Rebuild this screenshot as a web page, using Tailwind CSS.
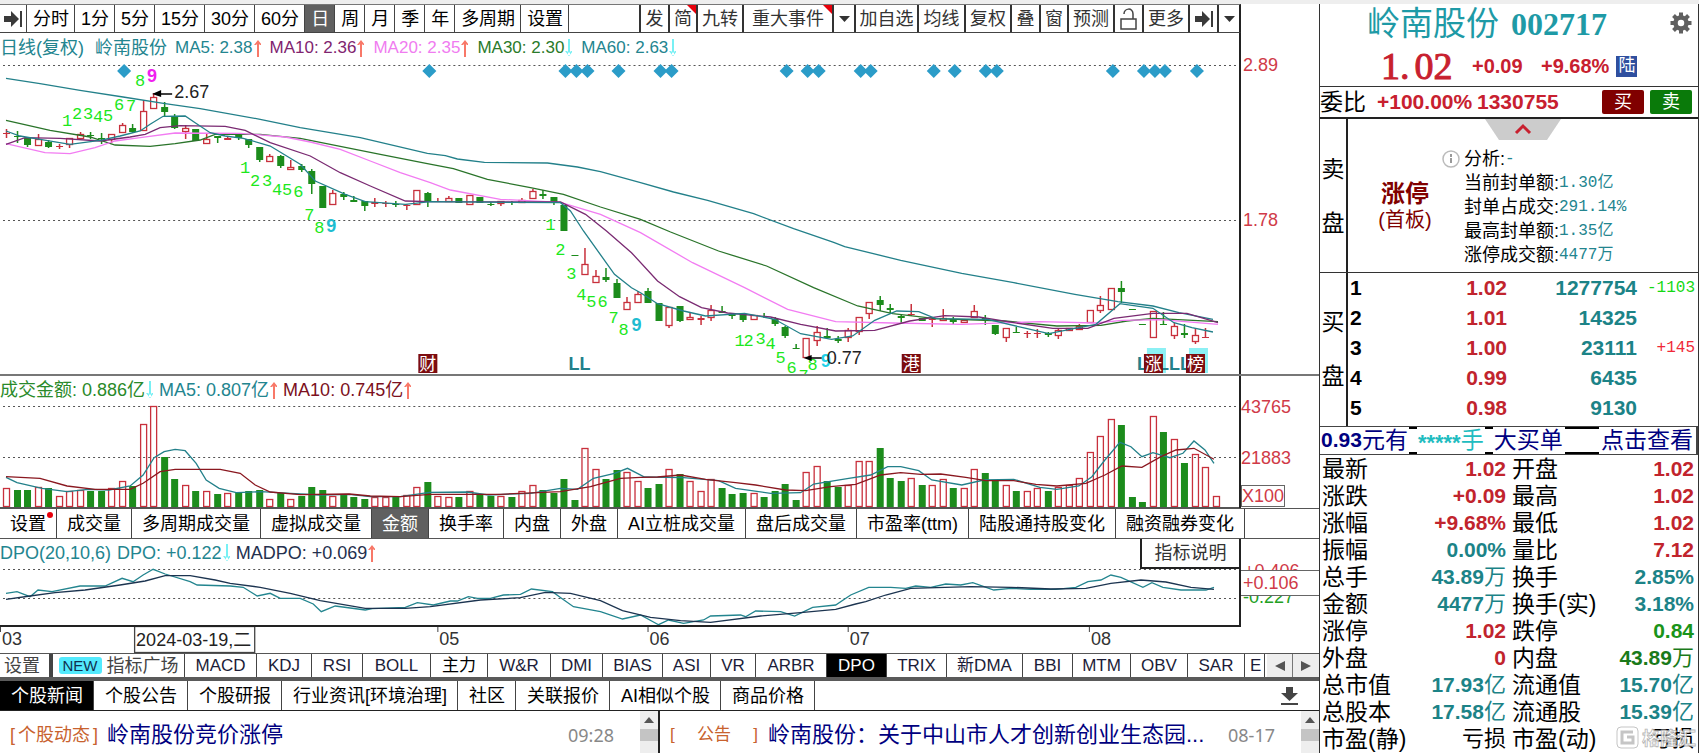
<!DOCTYPE html>
<html lang="zh-CN">
<head>
<meta charset="utf-8">
<title>岭南股份 002717</title>
<script src="https://cdn.jsdelivr.net/npm/@tailwindcss/browser@4"></script>
</head>
<body class="flex h-screen min-h-[753px] flex-col overflow-hidden bg-white font-['Liberation_Sans','Noto_Sans_CJK_SC',sans-serif] text-[18px] leading-[22px] text-black">
<div class="h-1 shrink-0 bg-[#eeeeee]"></div>
<div class="flex min-h-0 flex-1">

<main class="flex min-w-0 flex-1 flex-col">
  <!-- period toolbar -->
  <div class="flex h-[29px] shrink-0 pr-[78px]">
    <div class="flex flex-1 border-y border-r-2 border-r-[#222] border-t-[#777] border-b-[#444]">
      <button aria-label="展开" class="grid w-[27px] place-items-center border-r border-[#444]"><svg width="18" height="16" viewBox="0 0 18 16" fill="#3a3a3a"><path d="M0 5h7V0l8 8-8 8v-5H0zM16 0h2v16h-2z"/></svg></button>
      <nav class="flex *:border-r *:border-[#444] *:pl-[6px] *:pr-[5px]">
        <button>分时</button><button>1分</button><button>5分</button><button>15分</button><button>30分</button><button>60分</button><button class="bg-[#606060] text-white">日</button><button>周</button><button>月</button><button>季</button><button>年</button><button>多周期</button><button>设置</button>
      </nav>
      <div class="ml-auto flex text-[#333] *:border-l-2 *:border-[#333]">
        <button class="w-[29px]">发</button>
        <button class="relative w-[28px]">简<span class="absolute right-0 top-0 border-l-[9px] border-t-[9px] border-l-transparent border-t-red-600"></span></button>
        <button class="w-[46px]">九转</button>
        <button class="relative w-[90px]">重大事件<span class="absolute right-0 top-0 border-l-[9px] border-t-[9px] border-l-transparent border-t-red-600"></span></button>
        <button aria-label="事件菜单" class="grid w-[22px] place-items-center"><svg width="11" height="6"><path d="M0 0h11L5.500 6z" fill="#333"/></svg></button>
        <button class="w-[63px]">加自选</button>
        <button class="w-[47px]">均线</button>
        <button class="w-[46px]">复权</button>
        <button class="w-[29px]">叠</button>
        <button class="w-[28px]">窗</button>
        <button class="w-[46px]">预测</button>
        <button aria-label="锁定" class="grid w-[29px] place-items-center"><svg width="17" height="22" viewBox="0 0 17 22" fill="none" stroke="#444" stroke-width="1.500"><path d="M1 11h15v10H1zM4 6c0-6 9-7 9 0v5"/></svg></button>
        <button class="w-[46px]">更多</button>
        <button aria-label="收起" class="grid w-[29px] place-items-center"><svg width="18" height="16" viewBox="0 0 18 16" fill="#3a3a3a"><path d="M0 5h7V0l8 8-8 8v-5H0zM16 0h2v16h-2z"/></svg></button>
        <button aria-label="工具菜单" class="grid w-[22px] place-items-center"><svg width="11" height="6"><path d="M0 0h11L5.500 6z" fill="#333"/></svg></button>
      </div>
    </div>
  </div>

  <!-- price chart -->
  <section class="flex h-[343px] shrink-0 border-b-2 border-[#777]">
    <div class="min-w-0 flex-1 border-r-2 border-[#222]">
      <div class="flex h-[30px] items-center text-[17px] text-[#23858f]">
        <span class="mr-[11px] text-[18px]">日线(复权)</span><span class="mr-2 text-[18px]">岭南股份</span>
        <span>MA5: 2.38</span><svg class="ml-px mr-[9px]" width="7" height="18"><use href="#up"/></svg>
        <span class="text-[#80246f]">MA10: 2.36</span><svg class="ml-px mr-[9px]" width="7" height="18"><use href="#up"/></svg>
        <span class="text-[#f07cf0]">MA20: 2.35</span><svg class="ml-px mr-[9px]" width="7" height="18"><use href="#up"/></svg>
        <span class="text-[#2a7a2a]">MA30: 2.30</span><svg class="ml-px mr-[9px]" width="7" height="18"><use href="#down"/></svg>
        <span>MA60: 2.63</span><svg class="ml-px" width="7" height="18"><use href="#down"/></svg>
      </div>
      <svg id="price" class="block h-[311px] w-full" viewBox="0 62 1238 311" preserveAspectRatio="none"></svg>
    </div>
    <div class="w-[78px] pt-[21px] pl-[2px] text-[#d03a48]">
      <div>2.89</div><div class="mt-[133px]">1.78</div>
    </div>
  </section>

  <!-- turnover chart -->
  <section class="flex h-[132px] shrink-0">
    <div class="min-w-0 flex-1 border-r-2 border-[#222]">
      <div class="flex h-[28px] items-center">
        <span class="text-[#2a8a2a]">成交金额: 0.886亿</span><svg class="ml-px mr-[6px]" width="7" height="18"><use href="#down"/></svg>
        <span class="text-[#23858f]">MA5: 0.807亿</span><svg class="ml-px mr-[6px]" width="7" height="18"><use href="#up"/></svg>
        <span class="text-[#7c1020]">MA10: 0.745亿</span><svg class="ml-px" width="7" height="18"><use href="#up"/></svg>
      </div>
      <svg id="volume" class="block h-[104px] w-full" viewBox="0 404 1238 104" preserveAspectRatio="none"></svg>
    </div>
    <div class="w-[78px] pt-[20px] text-[#d03a48]">
      <div>43765</div><div class="mt-[29px]">21883</div>
      <div class="mt-[16px] inline-block border border-[#666] leading-[20px]">X100</div>
    </div>
  </section>

  <!-- sub-chart tabs -->
  <nav class="flex h-[31px] shrink-0 border-y border-[#555] *:shrink-0 *:border-r *:border-[#444] *:px-[10px]">
    <button class="relative">设置<span class="absolute right-[3px] top-[3px] size-[6px] rounded-full bg-red-600"></span></button><button>成交量</button><button>多周期成交量</button><button>虚拟成交量</button><button class="bg-[#606060] text-white">金额</button><button>换手率</button><button>内盘</button><button>外盘</button><button>AI立桩成交量</button><button>盘后成交量</button><button>市盈率(ttm)</button><button>陆股通持股变化</button><button>融资融券变化</button>
  </nav>

  <!-- DPO chart -->
  <section class="flex h-[88px] shrink-0">
    <div class="relative min-w-0 flex-1 border-b-2 border-r-2 border-[#222]">
      <div class="flex h-[28px] items-center text-[#23858f]">
        <span class="mr-[6px]">DPO(20,10,6)</span><span>DPO: +0.122</span><svg class="ml-px mr-[6px]" width="7" height="18"><use href="#down"/></svg>
        <span class="text-[#24304e]">MADPO: +0.069</span><svg class="ml-px" width="7" height="18"><use href="#up"/></svg>
      </div>
      <svg id="dpo" class="block h-[58px] w-full" viewBox="0 567 1238 58" preserveAspectRatio="none"></svg>
      <button class="absolute right-0 top-0 h-[30px] w-[99px] border-b-2 border-l-2 border-[#222] bg-white text-[#333]">指标说明</button>
    </div>
    <div class="w-[78px] pt-[23px] text-[#d03a48]">
      <div class="h-[8px] overflow-hidden pl-[3px] leading-[18px]">+0.406</div>
      <div class="border-y border-[#666] pl-[2px] leading-[24px]">+0.106</div>
      <div class="flex h-[10px] items-end overflow-hidden pl-[2px] leading-[18px] text-[#22a022]">-0.227</div>
    </div>
  </section>
  <div class="shrink-0 pr-[78px]"><svg id="axis" class="block h-[26px] w-full" viewBox="0 627 1240 26" preserveAspectRatio="none"></svg></div>

  <!-- indicator tabs -->
  <div class="flex h-[28px] shrink-0 border-b-4 border-t border-b-[#5a5a5a] border-t-[#555] text-[17px]">
    <nav class="flex min-w-0 flex-1 overflow-hidden text-[#1c1c38] *:shrink-0 *:border-r *:border-[#444]">
      <button class="w-[50px] pr-[5px] text-[18px] text-[#444]">设置</button>
      <button class="flex w-[135px] items-center justify-center gap-[5px] border-l-3 text-[18px] text-[#444]"><span class="rounded-[3px] bg-cyan-300 px-[4px] text-[15px] leading-[17px] text-[#103050]">NEW</span>指标广场</button>
      <button class="w-[72px]">MACD</button><button class="w-[55px]">KDJ</button><button class="w-[51px]">RSI</button><button class="w-[68px]">BOLL</button><button class="w-[57px] text-black">主力</button><button class="w-[63px]">W&amp;R</button><button class="w-[52px]">DMI</button><button class="w-[60px]">BIAS</button><button class="w-[48px]">ASI</button><button class="w-[45px]">VR</button><button class="w-[71px]">ARBR</button><button class="w-[60px] bg-black text-white">DPO</button><button class="w-[60px]">TRIX</button><button class="w-[76px]">新DMA</button><button class="w-[50px]">BBI</button><button class="w-[58px]">MTM</button><button class="w-[57px]">OBV</button><button class="w-[57px]">SAR</button><button class="w-[20px] pl-[5px] text-left">E</button>
    </nav>
    <button aria-label="向左" class="grid w-[26px] place-items-center border-r border-[#777] bg-[#eee]"><svg width="10" height="10"><path d="M10 0v10L0 5z" fill="#555"/></svg></button>
    <button aria-label="向右" class="grid w-[26px] place-items-center bg-[#eee]"><svg width="10" height="10"><path d="M0 0v10L10 5z" fill="#555"/></svg></button>
  </div>

  <!-- news -->
  <div class="flex h-[30px] shrink-0 border-b border-[#222]">
    <nav class="flex flex-1 *:border-r *:border-[#444] *:pl-[11px] *:pr-[10px]">
      <button class="bg-black text-white">个股新闻</button><button>个股公告</button><button>个股研报</button><button>行业资讯[环境治理]</button><button>社区</button><button>关联报价</button><button>AI相似个股</button><button>商品价格</button>
    </nav>
    <button aria-label="下载" class="mr-[21px]"><svg width="17" height="18" viewBox="0 0 17 18" fill="#444"><path d="M5 0h7v6h5l-8.500 8L0 6h5zM0 16h17v2H0z"/></svg></button>
  </div>
  <div class="flex min-h-0 flex-1 whitespace-nowrap">
    <div class="flex w-[660px] border-r-2 border-[#222]">
      <div class="flex flex-1 items-center pt-[5px]">
        <span class="ml-[10px] mr-[9px] flex w-[88px] justify-between text-[18px] text-[#c8622e]"><span>[</span><span>个股动态</span><span>]</span></span>
        <a href="#news" class="text-[22px] text-[#000080]">岭南股份竞价涨停</a>
        <time class="ml-auto mr-[26px] font-['Noto_Sans'] text-[#888]">09:28</time>
      </div>
      <div class="flex h-full w-[18px] flex-col items-center bg-[#eee]"><svg class="mt-[6px]" width="10" height="6"><path d="M0 6h10L5 0z" fill="#555"/></svg><div class="mt-[6px] h-[12px] w-full bg-[#c4c4c4]"></div></div>
    </div>
    <div class="flex min-w-0 flex-1">
      <div class="flex flex-1 items-center pt-[5px]">
        <span class="mx-[10px] flex w-[88px] justify-between text-[17px] text-[#c8622e]"><span>[</span><span>公告</span><span>]</span></span>
        <a href="#notice" class="text-[22px] text-[#000080]">岭南股份：关于中山市人才创新创业生态园...</a>
        <time class="ml-auto mr-[26px] font-['Noto_Sans'] text-[#888]">08-17</time>
      </div>
      <div class="flex h-full w-[18px] flex-col items-center bg-[#eee]"><svg class="mt-[6px]" width="10" height="6"><path d="M0 6h10L5 0z" fill="#555"/></svg><div class="mt-[6px] h-[12px] w-full bg-[#c4c4c4]"></div></div>
    </div>
  </div>
</main>

<aside class="relative flex w-[380px] shrink-0 flex-col border-x border-[#333]">
  <header class="relative h-[83px] shrink-0 border-b border-[#333]">
    <h1 class="flex items-center gap-[12px] pl-[47px] pt-[2px] text-[33px] leading-[36px] text-[#1e9aa6]">岭南股份<span class="font-['Liberation_Serif'] text-[32px] font-bold">002717</span></h1>
    <div class="flex items-center pl-[61px] pt-[2px] text-[20px] font-bold leading-[44px] text-[#c8202f]">
      <span class="flex w-[91px] gap-[5px] font-['Liberation_Serif'] text-[38px] font-normal [-webkit-text-stroke:1px_#c8202f]"><span>1.</span><span>02</span></span><span class="w-[69px]">+0.09</span><span class="mr-[7px]">+9.68%</span>
      <span class="grid h-[21px] w-[21px] place-items-center bg-[#2f4f9f] text-[17px] font-normal leading-[20px] text-white">陆</span>
    </div>
    <button aria-label="设置" class="absolute right-[6px] top-[8px]"><svg width="22" height="22" viewBox="-11 -11 22 22"><circle r="5.500" fill="none" stroke="#606060" stroke-width="4.500"/><path d="M0-10.500v4M0 6.500v4M-10.500 0h4M6.500 0h4M-7.500-7.500l3 3M4.500 4.500l3 3M-7.500 7.500l3-3M4.500-4.500l3-3" stroke="#606060" stroke-width="4"/></svg></button>
  </header>
  <div class="flex h-[32px] shrink-0 items-center border-b-2 border-[#222] text-[21px] font-bold text-[#c8202f]">
    <span class="w-[57px] text-[23px] font-normal text-black">委比</span><span class="w-[100px]">+100.00%</span><span>1330755</span>
    <button class="ml-auto h-[24px] w-[42px] rounded-[2px] bg-[#800000] text-[18px] font-normal text-white">买</button>
    <button class="ml-[6px] mr-[6px] h-[24px] w-[42px] rounded-[2px] bg-[#0a7a0a] text-[18px] font-normal text-white">卖</button>
  </div>

  <!-- sell side -->
  <section class="relative flex h-[154px] shrink-0 border-b border-[#333]">
    <div class="flex w-[28px] flex-col items-center gap-[31px] border-r-2 border-[#222] pt-[39px] text-[23px] leading-[23px]"><span>卖</span><span>盘</span></div>
    <button aria-label="收起" class="absolute left-[165px] top-0"><svg width="76" height="21" viewBox="0 0 76 21"><path d="M0 0h76L62 21H14z" fill="#ccc"/><path d="M31 14l7-7 7 7" fill="none" stroke="#c8202f" stroke-width="3"/></svg></button>
    <div class="w-[95px] pt-[62px] text-center text-[#800000] pl-[19px]">
      <div class="text-[24px] font-bold leading-[26px]">涨停</div><div class="text-[20px] leading-[26px]">(首板)</div>
    </div>
    <dl class="grid grid-cols-[auto_1fr] content-start pl-[21px] pt-[28px] leading-[24px]">
      <dt class="col-span-2 -ml-[22px] flex items-center"><svg class="mr-[4px]" width="18" height="18"><circle cx="9" cy="9" r="8" fill="none" stroke="#bbb" stroke-width="1.500"/><path d="M9 4v3M9 8v5" stroke="#999" stroke-width="2"/></svg>分析:<span class="font-['Liberation_Mono'] text-[16px] text-[#23858f]">-</span></dt>
      <dt>当前封单额:</dt><dd class="font-['Liberation_Mono','Noto_Sans_CJK_SC'] text-[16px] text-[#23858f]">1.30亿</dd>
      <dt>封单占成交:</dt><dd class="font-['Liberation_Mono'] text-[16px] text-[#23858f]">291.14%</dd>
      <dt>最高封单额:</dt><dd class="font-['Liberation_Mono','Noto_Sans_CJK_SC'] text-[16px] text-[#23858f]">1.35亿</dd>
      <dt>涨停成交额:</dt><dd class="font-['Liberation_Mono','Noto_Sans_CJK_SC'] text-[16px] text-[#23858f]">4477万</dd>
    </dl>
  </section>

  <!-- buy side -->
  <section class="flex h-[153px] shrink-0">
    <div class="flex w-[28px] flex-col items-center gap-[31px] border-r-2 border-[#222] pt-[38px] text-[23px] leading-[23px]"><span>买</span><span>盘</span></div>
    <table class="h-[150px] flex-1 text-right text-[21px] font-bold text-[#c1242d]">
      <tbody>
      <tr><th class="w-[20px] pl-[2px] text-left text-black">1</th><td class="w-[139px]">1.02</td><td class="w-[130px] text-[#1c8387]">1277754</td><td class="pr-[3px] font-['Liberation_Mono'] text-[16px] font-normal text-[#14d814]">-1103</td></tr>
      <tr><th class="pl-[2px] text-left text-black">2</th><td>1.01</td><td class="text-[#1c8387]">14325</td><td></td></tr>
      <tr><th class="pl-[2px] text-left text-black">3</th><td>1.00</td><td class="text-[#1c8387]">23111</td><td class="pr-[3px] font-['Liberation_Mono'] text-[16px] font-normal text-[#f02838]">+145</td></tr>
      <tr><th class="pl-[2px] text-left text-black">4</th><td>0.99</td><td class="text-[#1c8387]">6435</td><td></td></tr>
      <tr><th class="pl-[2px] text-left text-black">5</th><td>0.98</td><td class="text-[#1c8387]">9130</td><td></td></tr>
      </tbody>
    </table>
  </section>

  <a href="#orders" class="flex h-[29px] shrink-0 items-stretch border-y border-r-2 border-[#444] pl-px text-[23px] leading-[26px] text-[#000080]">
    <b class="text-[21px]">0.93</b><span>元有</span><i class="mx-[1px] w-[8px] border-y-2 border-black"></i>
    <span class="flex text-[#20bcc0]"><b class="text-[22px] leading-[32px]">*****</b>手</span><i class="mx-px w-[8px] border-y-2 border-black"></i>
    <span>大买单</span><i class="mx-[2px] flex-1 border-y-2 border-black"></i><span class="mr-[3px]">点击查看</span>
  </a>

  <table class="w-full flex-1 text-[21px] leading-[24px] [&_td]:text-right [&_td]:font-bold [&_td]:whitespace-nowrap [&_td_span]:font-normal [&_td_span]:text-[22px] [&_th]:text-left [&_th]:font-normal [&_th]:text-[23px] [&_th]:whitespace-nowrap">
    <tbody class="text-[#c1242d] [&_th]:text-black">
    <tr><th class="w-[90px] pl-[2px]">最新</th><td class="w-[96px]">1.02</td><th class="w-[92px] pl-[6px]">开盘</th><td class="pr-[4px]">1.02</td></tr>
    <tr><th class="pl-[2px]">涨跌</th><td>+0.09</td><th class="pl-[6px]">最高</th><td class="pr-[4px]">1.02</td></tr>
    <tr><th class="pl-[2px]">涨幅</th><td>+9.68%</td><th class="pl-[6px]">最低</th><td class="pr-[4px]">1.02</td></tr>
    <tr><th class="pl-[2px]">振幅</th><td class="text-[#1c8387]">0.00%</td><th class="pl-[6px]">量比</th><td class="pr-[4px]">7.12</td></tr>
    <tr class="text-[#1c8387]"><th class="pl-[2px]">总手</th><td>43.89<span>万</span></td><th class="pl-[6px]">换手</th><td class="pr-[4px]">2.85%</td></tr>
    <tr class="text-[#1c8387]"><th class="pl-[2px]">金额</th><td>4477<span>万</span></td><th class="pl-[6px]">换手(实)</th><td class="pr-[4px]">3.18%</td></tr>
    <tr><th class="pl-[2px]">涨停</th><td>1.02</td><th class="pl-[6px]">跌停</th><td class="pr-[4px] text-[#1a941a]">0.84</td></tr>
    <tr><th class="pl-[2px]">外盘</th><td>0</td><th class="pl-[6px]">内盘</th><td class="pr-[4px] text-[#1a7a1a]">43.89<span>万</span></td></tr>
    <tr class="text-[#1c8387]"><th class="pl-[2px]">总市值</th><td>17.93<span>亿</span></td><th class="pl-[6px]">流通值</th><td class="pr-[4px]">15.70<span>亿</span></td></tr>
    <tr class="text-[#1c8387]"><th class="pl-[2px]">总股本</th><td>17.58<span>亿</span></td><th class="pl-[6px]">流通股</th><td class="pr-[4px]">15.39<span>亿</span></td></tr>
    <tr class="text-black"><th class="pl-[2px]">市盈(静)</th><td><span>亏损</span></td><th class="pl-[6px]">市盈(动)</th><td class="pr-[4px]"><span>亏损</span></td></tr>
    </tbody>
  </table>
  <svg class="absolute bottom-[2px] right-0 opacity-85" width="82" height="26" viewBox="0 0 82 26"><rect x="1" y="2" width="21" height="21" rx="4" fill="#fff" stroke="#bbb"/><path d="M17 7H6v11h11v-6h-6" fill="none" stroke="#bbb" stroke-width="3"/><text x="26" y="20" font-size="18" font-weight="700" fill="#fff" stroke="#aaa" stroke-width=".8">格隆汇</text></svg>
</aside>
</div>

<svg class="absolute size-0" aria-hidden="true"><defs>
  <g id="up"><path d="M3 2h2v16H3zM0 6l4-5 4 5H6L4 4 2 6z" fill="#f87868"/></g>
  <g id="down"><path d="M3 0h2v17H3zM0 12l4 5 4-5H6l-2 2-2-2z" fill="#78f0f4"/></g>
</defs></svg>

<script>
const RED = '#c8303c', GREEN = '#1c8c1c', TEAL = '#23808a';
const barX = i => Math.round(6.3 + 10.51 * i);
const rect = (x, y, w, h, f, s) => `<rect x="${x}" y="${y}" width="${w}" height="${h}" fill="${f}" stroke="${s || 'none'}" stroke-width="1.300"/>`;
const grid = (y) => `<path d="M3 ${y}.5H1238" stroke="#555" stroke-width="1" stroke-dasharray="2 3"/>`;
// points are "x,y" pairs, y counted in thirds of a pixel from the given origin
const line = (pts, color, origin) => `<polyline fill="none" stroke="${color}" stroke-width="1.300" points="${pts.trim().split(/\s+/).map(p => { const [x, y] = p.split(',').map(Number); return x + ',' + (origin + y / 3).toFixed(1); }).join(' ')}"/>`;
const text = (x, y, t, color, size = 18, extra = '') => `<text x="${x}" y="${y}" fill="${color}" font-size="${size}" ${extra}>${t}</text>`;

// candles: colour, high, body top, body bottom, low (thirds of a pixel)
const early = `R385 397 399 412|G390 404 406 425|G412 412 432 438|R400 413 436 436|G418 422 438 442|R428 435 437 445|R412 412 432 440|R393 398 413 413|G393 402 404 415|G397 412 414 430|R400 400 418 427|R365 371 396 396|G370 380 392 396|R296 331 391 391|R276 287 323 323|G303 317 332 345|G340 345 380 384|R372 382 394 414|G385 385 420 420|R400 414 430 430|G404 404 412 427|R408 410 417 417|G402 402 410 418|G415 415 432 440|G438 438 478 483|R460 466 482 482|G462 465 495 502|R478 498 508 508|G490 496 508 514|G503 510 548 580|G556 556 622 622|R568 577 611 611|G574 580 588 598|G585 596 602 602|G600 600 616 630|R592 603 609 618|R600 607 609 617|G601 608 610 618|R610 612 614 627|R566 566 611 611|G573 577 602 617|R590 600 601 602|R586 592 602 602|G592 592 606 606|R583 583 612 612|G587 587 606 606|G603 608 610 616|R600 600 610 616|G600 602 605 611|R592 598 605 605|R563 570 595 595|G568 578 584 594|G588 588 606 612|G612 612 689 689`;
const late = `G73 72 75 73|R50 100 133 133|R117 136 155 155|G112 137 147 153|G145 157 200 200|R198 213 237 237|R180 190 217 217|G171 180 215 215|G215 215 269 269|R227 227 286 290|G224 226 269 273|R243 258 268 268|R256 262 266 283|R222 237 262 270|G224 241 247 247|G246 248 256 265|G250 250 268 273|R252 252 268 268|G247 254 258 262|G258 263 279 284|G285 288 314 322|G338 351 354 352|R322 322 380 380|R286 302 330 345|G292 316 321 321|G316 325 329 336|R292 297 320 334|R258 258 304 312|R213 213 250 265|G195 208 223 240|G220 231 236 248|G248 254 262 275|R220 248 252 256|G262 262 270 270|R262 263 265 287|R233 262 270 270|G258 264 272 280|R268 268 277 277|R221 241 262 262|G252 262 268 283|G283 283 309 313|R292 292 322 334|G288 303 305 304|R300 307 309 320|R293 306 308 320|G304 307 313 318|R292 298 316 325|R290 292 300 300|R278 285 298 298|R236 236 276 276|R194 222 240 246|R172 172 236 236|G150 172 182 215|G236 235 237 236|G281 280 282 281|R240 240 322 322|G243 280 282 281|R276 285 316 325|G280 306 313 320|R290 312 332 340|R292 317 321 321`;
const parse = (src, origin) => src.split('|').map(s => [s[0], ...s.slice(1).split(' ').map(v => Math.round(origin + v / 3))]);
let out = grid(64) + grid(219);
[...parse(early, 0), ...parse(late, 230)].forEach(([c, hi, top, bot, lo], i) => {
  const x = barX(i), col = c === 'R' ? RED : GREEN, h = bot - top;
  out += `<path d="M${x}.5 ${hi}V${top}M${x}.5 ${bot}V${lo}" stroke="${col}" stroke-width="1.500"/>`;
  out += h < 3 ? rect(x - 3, top, 7, Math.max(1, h), col) : c === 'R' ? rect(x - 2.5, top + .5, 6, h - 1, 'none', col) : rect(x - 3, top, 7, h, col);
});
out += line('6,232 40,248 80,268 123,288 165,308 200,323 260,355 300,380 360,410 427,457 445,464 457,474 484,484 547,486 577,498 600,512 640,545 673,573 707,598 753,638 793,683 833,724 844,737 900,778 961,817 1013,845 1074,880 1117,902 1152,915 1178,935 1212,955', TEAL, 0);
out += line('6,358 50,388 90,408 115,432 150,436 175,428 200,417 215,400 260,400 300,412 330,430 380,460 427,488 453,503 487,535 530,560 563,580 600,618 640,655 670,693 718,750 766,795 813,860 857,915 892,938 935,953 1004,960 1056,975 1100,973 1126,960 1152,952 1217,962', '#2a742a', 0);
out += line('6,428 45,455 70,458 95,440 115,420 140,410 175,396 240,397 285,408 310,423 340,445 370,480 400,515 430,545 450,567 500,595 560,604 600,640 640,695 692,785 744,860 787,925 835,962 892,966 961,970 1009,965 1039,962 1095,966 1121,958 1160,956 1217,970', '#f27cf2', 0);
out += line('6,430 25,410 60,412 100,420 130,408 145,400 160,380 180,374 225,376 245,388 270,425 310,465 340,515 370,555 405,600 430,602 560,603 585,640 606,690 631,755 657,840 679,887 701,920 727,936 770,948 800,970 835,990 874,988 909,960 944,944 978,948 1013,965 1052,982 1087,982 1113,952 1152,937 1186,937 1217,965', '#7a2a72', 0);
out += line('6,390 20,405 40,415 70,430 100,418 120,405 140,390 150,370 163,346 185,345 195,365 210,395 225,405 243,412 270,435 300,490 315,540 345,580 365,602 405,610 430,602 560,605 570,630 583,690 614,820 631,860 640,875 657,908 683,930 705,945 744,937 774,955 800,998 831,1015 852,1005 874,958 896,930 918,932 935,953 987,955 1022,980 1048,998 1074,982 1095,970 1119,908 1152,922 1173,965 1191,980 1212,993', TEAL, 0);
[123, 428, 564, 575, 586, 617, 659, 670, 785, 806, 817, 859, 869, 932, 953, 984, 995, 1111, 1142, 1153, 1163, 1195].forEach(x => out += `<path d="M${x - 6} 70l7-7 7 7-7 7z" fill="#2b9cc8"/>`);
// nine-turn counters: digit, centre x, centre y
'1,67,119 2,77,112 3,88,112 4,98,115 5,108,114 6,119,103 7,131,104 8,140,79 1,245,166 2,255,179 3,267,179 4,277,188 5,287,188 6,298,190 7,309,213 8,319,226 1,550,223 2,560,248 3,571,272 4,581,293 5,591,300 6,602,300 7,613,316 8,623,328 1,739,339 2,748,339 3,760,337 4,770,342 5,780,356 6,791,366 7,803,374 8,812,363'.split(' ').forEach(s => {
  const [d, x, y] = s.split(',');
  out += text(x, +y + 6, d, '#1ce81c', 17, 'text-anchor="middle" font-family="Liberation Mono"');
});
[[152, 75, '#f020f0'], [331, 225, '#20bcd0'], [636, 324, '#20bcd0'], [825, 360, '#20d0e8']].forEach(([x, y, c]) => out += text(x, y + 6, '9', c, 18, 'text-anchor="middle" font-weight="700"'));
out += '<path d="M156 93h16M808 357h13" stroke="#000" stroke-width="1.500"/><path d="M152 93l9-4v7zM803 357l8-3v6z" fill="#000"/>';
out += text(174, 97, '2.67', '#222') + text(826, 363, '0.77', '#222');
out += rect(1146, 347, 19, 25, '#8cf0f4') + rect(1188, 347, 19, 25, '#8cf0f4');
out += text(568, 369, 'LL', TEAL, 18, 'font-weight="700"') + text(1136, 369, 'L', TEAL, 18, 'font-weight="700"') + text(1157, 369, 'LLL', TEAL, 18, 'font-weight="700"');
[['财', 418], ['港', 901], ['涨', 1143], ['榜', 1185]].forEach(([t, x]) => out += rect(x, 353, 19, 19, '#7c0c10') + text(x + 1, 369, t, '#fff', 17));
document.getElementById('price').innerHTML = out;

// turnover bars: colour and top edge in thirds of a pixel below y = 230
const vol = 'R775 G779 G779 R772 G775 R797 R782 R779 G782 G782 R775 R752 G768 R582 R528 G681 G747 R766 G784 R784 G793 R790 G790 G784 G779 R807 G790 R807 G797 G770 G779 R797 G795 G802 G807 R802 R802 G800 R795 R771 G757 R797 R802 G802 R784 G792 G797 R797 G802 R784 R766 G779 G790 G747 G811 R654 R717 G747 G720 R727 R753 G775 G762 R717 G731 R753 R784 R748 G775 G793 G788 R788 G802 G784 G762 G811 R727 R709 G753 G771 R765 R694 R694 G653 G744 G752 R744 G766 R766 R748 G775 R775 R717 G730 G752 R766 G784 R784 R775 G784 R771 R766 R744 R667 R618 R568 G586 G802 G815 R559 G607 R627 G698 R672 R712 R797'.split(' ');
out = grid(406) + grid(457);
vol.forEach((s, i) => {
  const x = barX(i), y = Math.round(230 + s.slice(1) / 3);
  out += s[0] === 'R' ? rect(x - 2.5, y + .5, 6, 506 - y, 'none', RED) : rect(x - 3, y, 7, 507 - y, GREEN);
});
out += line('6,742 17,758 42,775 67,785 88,778 109,780 130,768 143,735 154,683 164,665 175,658 185,662 196,700 206,750 219,775 236,788 261,785 290,790 320,795 349,793 370,800 400,800 429,787 467,786 488,795 530,790 560,775 577,778 593,745 614,730 627,715 644,741 683,743 718,752 735,775 770,790 800,788 813,762 848,745 870,735 887,710 900,710 918,722 931,750 961,765 983,750 1013,748 1039,772 1056,778 1078,768 1091,740 1104,690 1119,637 1130,650 1141,680 1152,668 1169,683 1182,670 1193,633 1204,660 1213,700', TEAL, 230);
out += line('6,740 40,745 67,768 95,778 130,778 143,760 160,725 175,718 220,718 240,730 255,765 270,786 300,794 349,792 370,798 400,800 430,793 500,793 560,785 590,770 620,745 640,742 657,741 680,735 705,748 735,758 755,765 785,780 805,782 830,770 855,763 880,735 900,728 920,733 940,732 965,742 985,752 1013,752 1035,763 1056,768 1085,760 1104,735 1121,708 1141,712 1160,680 1175,660 1193,655 1213,688', '#8a1820', 230);
out += rect(0, 507, 1240, 1, '#555');
document.getElementById('volume').innerHTML = out;

out = grid(569) + grid(598);
out += line('6,280 17,275 30,290 38,270 52,275 80,258 105,258 122,235 133,245 143,225 153,208 165,222 190,245 197,255 230,258 243,262 257,288 270,280 280,295 300,295 313,312 321,335 335,318 365,330 372,326 405,322 417,308 433,315 450,303 457,303 468,290 477,295 490,295 503,285 520,283 531,267 552,275 561,295 573,320 600,335 622,357 640,345 658,374 668,360 683,370 703,360 710,348 740,345 745,350 755,333 780,335 794,348 812,322 835,315 850,285 868,262 890,262 905,265 915,258 930,262 945,252 960,255 972,248 993,270 1010,265 1030,268 1055,268 1075,262 1087,245 1100,240 1110,225 1120,232 1142,262 1151,248 1162,262 1180,270 1205,270 1213,262', '#23858f', 500);
out += line('6,298 30,288 55,278 85,270 120,255 145,243 165,227 190,227 215,240 230,250 260,262 290,280 320,302 365,325 405,325 430,320 480,300 520,293 545,277 570,280 600,302 622,332 650,352 680,362 710,367 760,348 800,338 835,328 855,312 865,305 885,285 910,265 970,260 1010,262 1050,267 1085,265 1110,250 1140,240 1165,246 1190,262 1213,268', '#1c3450', 500);
document.getElementById('dpo').innerHTML = out;

out = '';
[['03', 0], ['05', 437], ['06', 647], ['07', 847], ['08', 1088]].forEach(([t, x]) => out += rect(x, 627, 1, 5, '#444') + text(x + 2, 645, t, '#333'));
out += rect(134.5, 626.5, 120, 26, '#fff', '#444') + text(136, 646, '2024-03-19,二', '#222');
document.getElementById('axis').innerHTML = out;
</script>
</body>
</html>
